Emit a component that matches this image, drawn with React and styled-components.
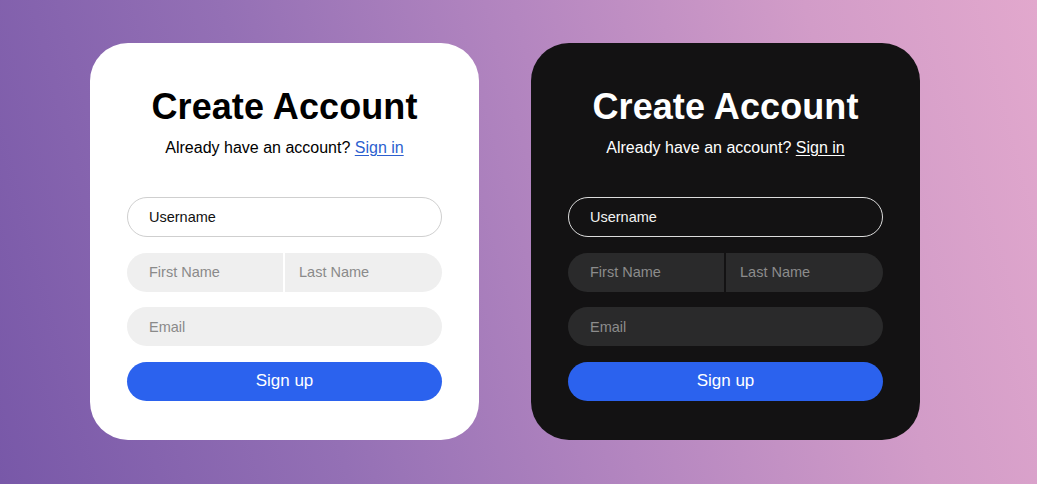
import styled, { createGlobalStyle } from "styled-components";

const GlobalStyle = createGlobalStyle`
  html, body {
    margin: 0;
    padding: 0;
  }
  body {
    font-family: "Liberation Sans", Arial, sans-serif;
  }
`;

export default function App() {
  return (
    <>
      <GlobalStyle />
      <Page>
        <SignupCard variant="light" />
        <SignupCard variant="dark" />
      </Page>
    </>
  );
}

function SignupCard({ variant }) {
  const dark = variant === "dark";
  return (
    <Card $dark={dark}>
      <Title>Create Account</Title>
      <Subtitle>
        Already have an account? <SignIn href="#" $dark={dark}>Sign in</SignIn>
      </Subtitle>
      <Form onSubmit={(e) => e.preventDefault()}>
        <Username $dark={dark} placeholder="Username" />
        <Row>
          <Field $dark={dark} $side="left" placeholder="First Name" />
          <Field $dark={dark} $side="right" placeholder="Last Name" />
        </Row>
        <Field $dark={dark} placeholder="Email" />
        <SubmitButton type="submit">Sign up</SubmitButton>
      </Form>
    </Card>
  );
}

const Page = styled.main`
  width: 1037px;
  height: 484px;
  box-sizing: border-box;
  padding: 43px 0 0 90px;
  display: flex;
  align-items: flex-start;
  gap: 52px;
  overflow: hidden;
  background: linear-gradient(75deg, #7858a8 0%, #9470b5 30%, #b486c0 55%, #d29cc8 80%, #e2a8cd 100%);
`;

const Card = styled.section`
  width: 389px;
  height: 397px;
  box-sizing: border-box;
  border-radius: 38px;
  padding: 46px 37px 0;
  display: flex;
  flex-direction: column;
  align-items: center;
  background: ${(p) => (p.$dark ? "#131213" : "#ffffff")};
  color: ${(p) => (p.$dark ? "#ffffff" : "#000000")};
`;

const Title = styled.h1`
  margin: 0;
  font-size: 36px;
  line-height: 36px;
  font-weight: 700;
  letter-spacing: 0.1px;
`;

const Subtitle = styled.p`
  margin: 13px 0 0;
  font-size: 16px;
  line-height: 20px;
`;

const SignIn = styled.a`
  color: ${(p) => (p.$dark ? "#ffffff" : "#2c5fcf")};
  text-decoration: underline;
  text-underline-offset: 2px;
`;

const Form = styled.form`
  margin-top: 39px;
  width: 315px;
  display: flex;
  flex-direction: column;
  gap: 15.5px;
`;

const Row = styled.div`
  display: flex;
  gap: 2px;
  height: 39px;
`;

const Field = styled.input`
  box-sizing: border-box;
  height: 39px;
  width: ${(p) => (p.$side === "left" ? "156px" : p.$side === "right" ? "157px" : "100%")};
  flex: none;
  border: none;
  outline: none;
  padding: 0 0 0 ${(p) => (p.$side === "right" ? "14px" : "22px")};
  font-family: inherit;
  font-size: 14.5px;
  background: ${(p) => (p.$dark ? "#2a2a2b" : "#efefef")};
  color: ${(p) => (p.$dark ? "#eeeeee" : "#111111")};
  border-radius: ${(p) =>
    p.$side === "left"
      ? "20px 0 0 20px"
      : p.$side === "right"
      ? "0 20px 20px 0"
      : "20px"};

  &::placeholder {
    color: ${(p) => (p.$dark ? "#8c8c8c" : "#8a8a8a")};
  }
`;

const Username = styled.input`
  box-sizing: border-box;
  height: 40px;
  border-radius: 20px;
  outline: none;
  padding: 0 0 0 21px;
  font-family: inherit;
  font-size: 14.5px;
  background: transparent;
  border: 1.5px solid ${(p) => (p.$dark ? "#dcdcdc" : "#cfcfcf")};

  &::placeholder {
    color: ${(p) => (p.$dark ? "#f2f2f2" : "#111111")};
  }
`;

const SubmitButton = styled.button`
  height: 39px;
  border: none;
  border-radius: 20px;
  background: #2b62ee;
  color: #ffffff;
  font-family: inherit;
  font-size: 17px;
  cursor: pointer;
`;
